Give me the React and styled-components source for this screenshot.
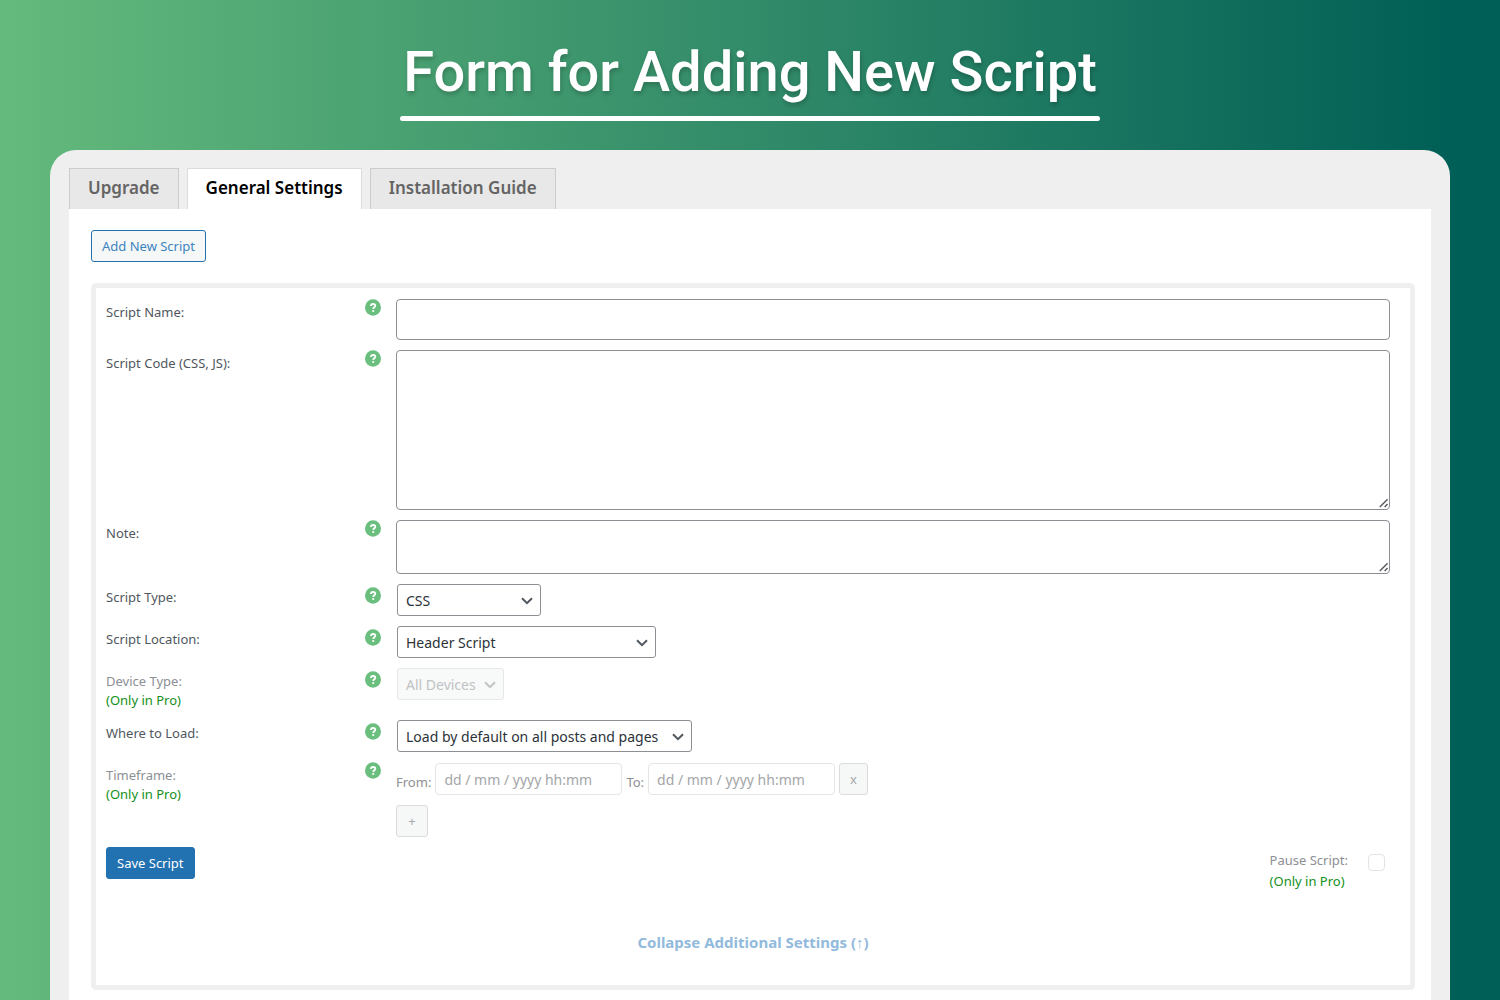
import styled, { createGlobalStyle } from "styled-components"
import { useState } from "react"

const GlobalStyle = createGlobalStyle`
    *{
        box-sizing: border-box;
    }
    body{
        margin: 0;
        font-family: "Noto Sans", "Open Sans", sans-serif;
        font-size: 13px;
        line-height: 19px;
        color: #50575e;
    }
    button, input, select, textarea{
        font-family: inherit;
        margin: 0;
    }
`

const Page = styled.main`
    min-height: 100vh;
    padding: 0 50px;
    display: flex;
    flex-direction: column;
    background: linear-gradient(to right, #64ba7c 0%, #328b69 50%, #005f56 97%);
`

const Header = styled.header`
    height: 150px;
    padding-top: 38px;
    display: flex;
    flex-direction: column;
    align-items: center;

    h1{
        margin: 0;
        padding-bottom: 10px;
        text-align: center;
        font-family: Roboto, sans-serif;
        font-size: 56px;
        font-weight: 500;
        line-height: 68px;
        color: #fff;
        text-shadow: 1px 3px 4px rgba(0, 0, 0, 0.2);
    }
    &::after{
        content: "";
        width: 700px;
        height: 5px;
        border-radius: 3px;
        background-color: #fff;
    }
`

const Card = styled.section`
    flex: 1;
    display: flex;
    flex-direction: column;
    padding: 18px 19px 0;
    border-radius: 26px 26px 0 0;
    background-color: #efefef;
`

const Tabs = styled.nav`
    display: flex;
    gap: 8px;
`

const Tab = styled.a`
    height: 41px;
    padding: 0 18px;
    border: 1px solid ${({ $active }) => ($active ? "#dcdcde" : "#cccccc")};
    border-bottom: none;
    background-color: ${({ $active }) => ($active ? "#fff" : "#e8e8e8")};
    color: ${({ $active }) => ($active ? "#000" : "#646464")};
    font-size: 17px;
    font-weight: 600;
    line-height: 38px;
    text-decoration: none;
    white-space: nowrap;
`

const Panel = styled.div`
    flex: 1;
    padding: 21px 16px 11px 22px;
    background-color: #fff;
`

const Button = styled.button`
    height: 32px;
    min-width: ${({ $square }) => ($square ? "32px" : "0")};
    padding: 0 10px;
    border: 1px solid #2271b1;
    border-radius: 3px;
    background-color: ${({ $primary }) => ($primary ? "#2271b1" : "#f6f7f7")};
    color: ${({ $primary }) => ($primary ? "#fff" : "#3c84c0")};
    font-size: 13px;
    cursor: pointer;

    &:disabled{
        border-color: #dcdcde;
        background-color: #f6f7f7;
        color: #a7aaad;
        cursor: default;
    }
`

const ScriptForm = styled.form`
    margin-top: 21px;
    padding: 11px 10px 32px;
    border: 5px solid #efefef;
    border-radius: 5px;
`

const Row = styled.div`
    display: grid;
    grid-template-columns: 259px 16px 1fr;
    align-items: start;
    margin: 0 10px 10px 0;

    .help{
        margin-top: ${({ $low }) => ($low ? "3px" : "0")};
    }
    .field{
        margin-left: 15px;
        min-width: 0;
    }
`

const Label = styled.label`
    display: block;
    padding-top: 4px;
    color: ${({ $muted }) => ($muted ? "#8c8f94" : "#50575e")};
`

const ProLink = styled.a`
    display: block;
    color: #149020;
    text-decoration: none;
`

const HelpSvg = styled.svg`
    display: block;
    width: 16px;
    height: 17px;
`

const TextInput = styled.input`
    display: block;
    width: 100%;
    height: 41px;
    padding: 0 8px;
    border: 1px solid #8c8f94;
    border-radius: 4px;
    background-color: #fff;
    font-size: 14px;
`

const TextAreaWrap = styled.div`
    position: relative;

    textarea{
        display: block;
        width: 100%;
        height: ${({ $tall }) => ($tall ? "160px" : "54px")};
        padding: 6px 8px;
        border: 1px solid #8c8f94;
        border-radius: 4px;
        background-color: #fff;
        font-size: 14px;
        resize: vertical;
    }
    textarea::-webkit-resizer{
        background-color: transparent;
    }
    svg{
        position: absolute;
        right: 1px;
        bottom: 2px;
        width: 10px;
        height: 10px;
        pointer-events: none;
    }
`

const SelectWrap = styled.div`
    position: relative;
    width: ${({ $width }) => $width};
    margin: 0 1px;
    color: ${({ $disabled }) => ($disabled ? "#c0c2c4" : "#2c3338")};

    select{
        appearance: none;
        display: block;
        width: 100%;
        height: 32px;
        padding: 0 24px 0 8px;
        border: 1px solid #8c8f94;
        border-radius: 3px;
        background-color: #fff;
        color: inherit;
        font-size: 14px;
        opacity: 1;
    }
    select:disabled{
        border-color: #e6e7e8;
        background-color: #f8f9f9;
    }
    svg{
        position: absolute;
        top: 13px;
        right: 8px;
        width: 12px;
        height: 8px;
        pointer-events: none;
    }
`

const TimeRow = styled.div`
    display: flex;
    align-items: center;
    gap: 4px;
    padding-top: 1px;
    margin-bottom: 10px;

    label{
        padding-top: 6px;
        color: #8c8f94;
    }
    input{
        width: 187px;
        height: 32px;
        padding: 0 8px;
        border: 1px solid #e4e5e6;
        border-radius: 4px;
        background-color: #fff;
        font-size: 14px;
    }
    input::placeholder{
        color: #a4a6a8;
        opacity: 1;
    }
`

const Actions = styled.div`
    display: flex;
    justify-content: space-between;
    align-items: flex-start;
    padding-right: 15px;
`

const Pause = styled.div`
    display: flex;
    gap: 20px;
    line-height: 21px;

    label{
        padding-top: 3px;
    }
    input{
        appearance: none;
        width: 17px;
        height: 17px;
        margin-top: 7px;
        border: 1px solid #e2e3e4;
        border-radius: 4px;
        background-color: #fff;
    }
`

const Collapse = styled.a`
    display: block;
    width: fit-content;
    margin: 40px auto 0;
    color: #92badc;
    font-size: 15px;
    font-weight: 700;
    line-height: 20px;
    text-decoration: none;

    span{
        font-family: "Liberation Sans", sans-serif;
        font-weight: 400;
    }
`

const Help = () => (
    <HelpSvg className="help" viewBox="0 0 16 17" aria-hidden="true">
        <ellipse cx="8" cy="8.5" rx="8" ry="8.2" fill="#6abf7e" />
        <path d="M5.9 7.1C5.9 5.7 6.8 5 8.1 5s2.2.7 2.2 1.8c0 1.5-2 1.5-2 3.1" fill="none" stroke="#fff" strokeWidth="1.8" />
        <circle cx="8.2" cy="12" r="1.1" fill="#fff" />
    </HelpSvg>
)

const TextArea = ({ id, tall }) => (
    <TextAreaWrap $tall={tall}>
        <textarea id={id} />
        <svg viewBox="0 0 10 10" aria-hidden="true">
            <path d="M.8 9L8.6 1.2M5.6 9l3-3" fill="none" stroke="#55585c" strokeWidth="1.4" />
        </svg>
    </TextAreaWrap>
)

const Select = ({ id, width, options, disabled }) => (
    <SelectWrap $width={width} $disabled={disabled}>
        <select id={id} disabled={disabled}>
            {options.map(option => <option key={option}>{option}</option>)}
        </select>
        <svg viewBox="0 0 12 8" aria-hidden="true">
            <path d="M1 1.2l5 5 5-5" fill="none" stroke={disabled ? "#c0c2c4" : "#50575e"} strokeWidth="2" />
        </svg>
    </SelectWrap>
)

const FormRow = ({ id, label, pro, low, children }) => (
    <Row $low={low}>
        <div>
            <Label htmlFor={id} $muted={pro}>{label}</Label>
            {pro && <ProLink href="#pro">(Only in Pro)</ProLink>}
        </div>
        <Help />
        <div className="field">{children}</div>
    </Row>
)

const tabs = ["Upgrade", "General Settings", "Installation Guide"]

const App = () => {

    const [activeTab, setActiveTab] = useState("General Settings")

    return (
        <Page>
            <GlobalStyle />
            <Header>
                <h1>Form for Adding New Script</h1>
            </Header>
            <Card>
                <Tabs>
                    {tabs.map(tab => (
                        <Tab key={tab} href="#tab" $active={tab === activeTab} onClick={() => setActiveTab(tab)}>{tab}</Tab>
                    ))}
                </Tabs>
                <Panel>
                    <Button type="button">Add New Script</Button>
                    <ScriptForm onSubmit={e => e.preventDefault()}>
                        <FormRow id="name" label="Script Name:">
                            <TextInput id="name" type="text" />
                        </FormRow>
                        <FormRow id="code" label="Script Code (CSS, JS):">
                            <TextArea id="code" tall />
                        </FormRow>
                        <FormRow id="note" label="Note:">
                            <TextArea id="note" />
                        </FormRow>
                        <FormRow id="type" label="Script Type:" low>
                            <Select id="type" width="144px" options={["CSS", "JS"]} />
                        </FormRow>
                        <FormRow id="location" label="Script Location:" low>
                            <Select id="location" width="259px" options={["Header Script", "Footer Script"]} />
                        </FormRow>
                        <FormRow id="device" label="Device Type:" pro low>
                            <Select id="device" width="107px" options={["All Devices"]} disabled />
                        </FormRow>
                        <FormRow id="where" label="Where to Load:" low>
                            <Select id="where" width="295px" options={["Load by default on all posts and pages"]} />
                        </FormRow>
                        <FormRow id="from" label="Timeframe:" pro>
                            <TimeRow>
                                <label htmlFor="from">From:</label>
                                <input id="from" type="text" placeholder="dd / mm / yyyy hh:mm" disabled />
                                <label htmlFor="to">To:</label>
                                <input id="to" type="text" placeholder="dd / mm / yyyy hh:mm" disabled />
                                <Button type="button" disabled>x</Button>
                            </TimeRow>
                            <Button type="button" $square disabled>+</Button>
                        </FormRow>
                        <Actions>
                            <Button type="submit" $primary>Save Script</Button>
                            <Pause>
                                <div>
                                    <Label htmlFor="pause" $muted>Pause Script:</Label>
                                    <ProLink href="#pro">(Only in Pro)</ProLink>
                                </div>
                                <input id="pause" type="checkbox" disabled />
                            </Pause>
                        </Actions>
                        <Collapse href="#collapse">Collapse Additional Settings (<span>↑</span>)</Collapse>
                    </ScriptForm>
                </Panel>
            </Card>
        </Page>
    )
}

export default App
